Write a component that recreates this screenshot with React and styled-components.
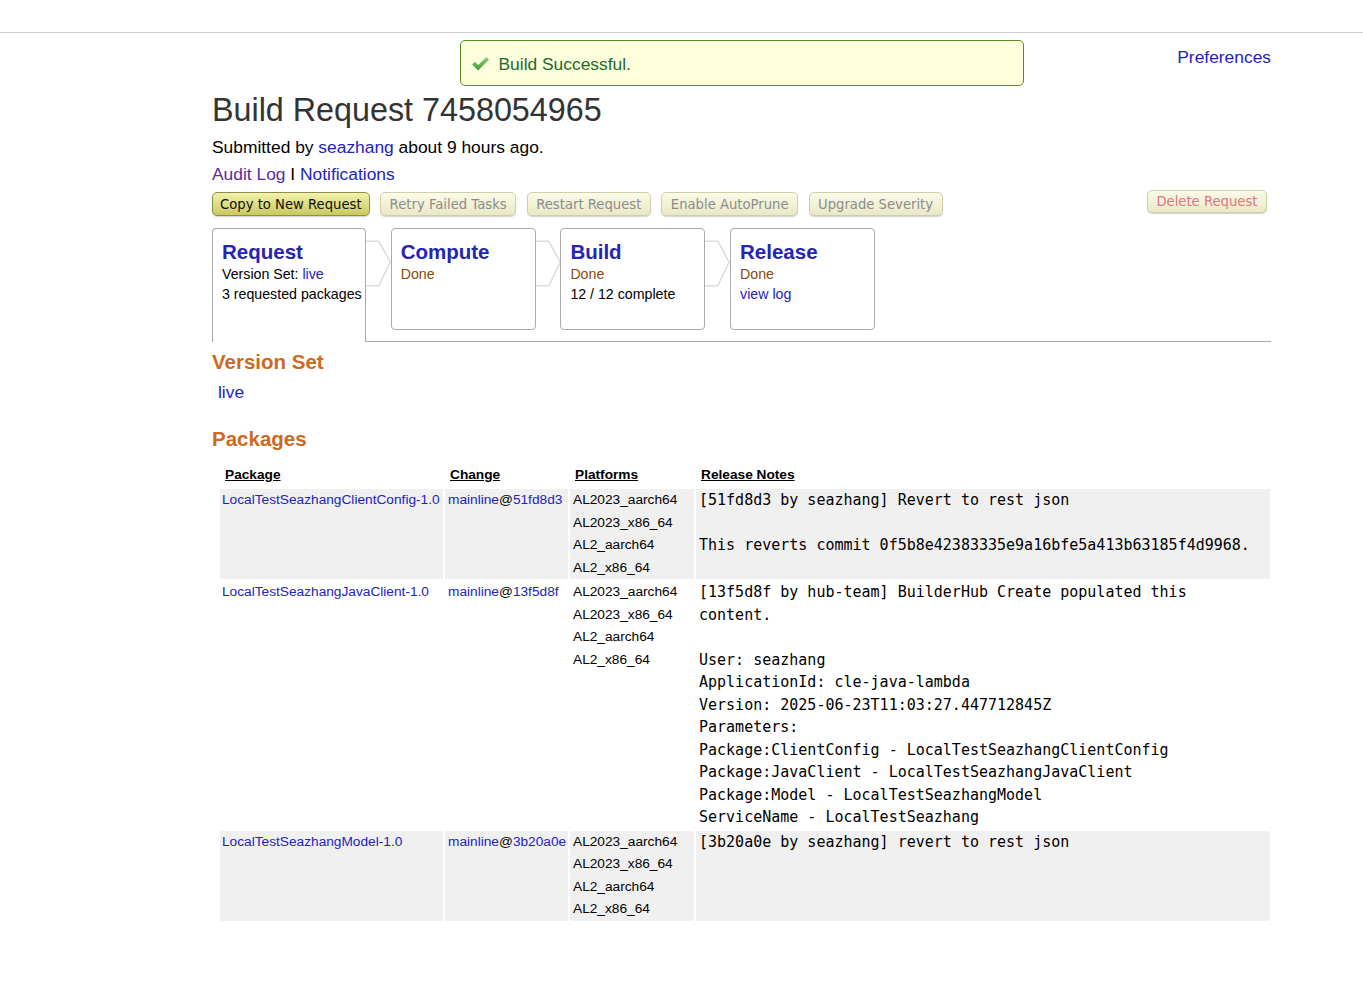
import React from 'react';
import styled, { createGlobalStyle } from 'styled-components';

const GlobalStyle = createGlobalStyle`
  body {
    margin: 0;
    background: #fff;
    font-family: 'Liberation Sans', Arial, sans-serif;
    color: #000;
  }
  a {
    color: #2323c0;
    text-decoration: none;
  }
`;

const TopBar = styled.div`
  height: 32px;
  border-bottom: 1px solid #d0d0d0;
`;

const Page = styled.div`
  width: 1059px;
  margin-left: 212px;
`;

const FlashRow = styled.div`
  display: grid;
  grid-template-columns: 1fr 564px 1fr;
  margin-top: 7px;
`;

const Flash = styled.div`
  grid-column: 2;
  display: flex;
  align-items: center;
  gap: 9px;
  padding: 2px 0 0 10px;
  box-sizing: border-box;
  height: 46px;
  background: #ffffdd;
  border: 1px solid #5b8c27;
  border-radius: 5px;
  color: #1b6b2b;
  font-size: 17.4px;
`;

const Prefs = styled.a`
  grid-column: 3;
  justify-self: end;
  margin-top: 7px;
  font-size: 17.4px;
`;

const Title = styled.h1`
  margin: 5px 0 0;
  font-size: 32.3px;
  font-weight: normal;
  line-height: 38px;
  color: #333;
`;

const Line = styled.div`
  font-size: 17.4px;
  line-height: 27px;
  margin-top: ${p => p.$top || 0}px;
`;

const Visited = styled.a`
  color: #5a2aa8;
`;

const Buttons = styled.div`
  display: flex;
  align-items: flex-start;
  gap: 10.5px;
  margin-top: 2px;
`;

const Button = styled.button`
  height: ${p => (p.$danger ? 23 : 24)}px;
  margin-top: ${p => (p.$danger ? 0 : 2)}px;
  margin-left: ${p => (p.$danger ? 'auto' : '0')};
  margin-right: ${p => (p.$danger ? 4 : 0)}px;
  padding: 0 ${p => (p.$primary ? 7 : 8.5)}px;
  font-family: 'DejaVu Sans', sans-serif;
  font-size: 13.2px;
  border-radius: 5px;
  border: 1px solid ${p => (p.$primary ? '#8e8e45' : '#cfcfa8')};
  background: ${p =>
    p.$primary
      ? 'linear-gradient(#f2f2ac, #c9c95f)'
      : 'linear-gradient(#fbfbe8, #e9e9c6)'};
  color: ${p => (p.$primary ? '#111' : p.$danger ? '#e07585' : '#8c8c8c')};
  box-shadow: 0 1px 1px rgba(0, 0, 0, 0.18);
`;

const Steps = styled.div`
  display: flex;
  align-items: flex-start;
  margin-top: 12px;
  border-bottom: 1px solid #aaa;
  height: 113px;
`;

const Step = styled.div`
  box-sizing: border-box;
  flex: none;
  width: ${p => (p.$active ? 154 : 145)}px;
  height: ${p => (p.$active ? 114 : 102)}px;
  padding: 11px 0 0 9px;
  border: 1px solid #aaa;
  border-bottom: ${p => (p.$active ? 'none' : '1px solid #aaa')};
  border-radius: ${p => (p.$active ? '4px 4px 0 0' : '4px')};
  background: #fff;
  white-space: nowrap;
`;

const StepTitle = styled.div`
  font-size: 20.5px;
  font-weight: bold;
  color: #2525b5;
  line-height: 24px;
`;

const StepLine = styled.div`
  font-size: 14.2px;
  line-height: 20px;
  color: ${p => (p.$done ? '#8a4a08' : '#000')};
`;

const Arrow = styled.svg`
  flex: none;
  display: block;
  margin-top: 12px;
`;

const Heading = styled.h2`
  margin: ${p => p.$top}px 0 0;
  font-size: 20.5px;
  font-weight: bold;
  line-height: 24px;
  color: #cc6a22;
`;

const VsLink = styled.a`
  display: block;
  margin: 7px 0 0 6px;
  font-size: 17.4px;
  line-height: 22px;
`;

const Table = styled.table`
  margin: 14px 0 0 6px;
  border-spacing: 2px;
  table-layout: fixed;
  width: 1054px;
`;

const Th = styled.th`
  text-align: left;
  font-size: 13.7px;
  font-weight: bold;
  text-decoration: underline;
  padding: 0 5px 4px;
  line-height: 16px;
`;

const Tr = styled.tr`
  background: ${p => (p.$shade ? '#f0f0f0' : '#fff')};
`;

const Td = styled.td`
  vertical-align: top;
  padding: 0 ${p => (p.$wide ? 3 : 2)}px;
  font-size: 13.7px;
  line-height: 22.5px;
`;

const Notes = styled.pre`
  margin: 0;
  font-family: 'DejaVu Sans Mono', monospace;
  font-size: 15px;
  line-height: 22.5px;
  white-space: pre-wrap;
`;

const Check = () => (
  <svg width="19" height="16" viewBox="0 0 19 16">
    <defs>
      <linearGradient id="ck" x1="0" y1="0" x2="0" y2="1">
        <stop offset="0" stopColor="#8fd07a" />
        <stop offset="1" stopColor="#3e9a3a" />
      </linearGradient>
    </defs>
    <path d="M1 8.5 L4 5.8 L7.2 9 L15.5 1 L18 3.6 L7.2 14.5 Z" fill="url(#ck)" />
  </svg>
);

const StepArrow = () => (
  <Arrow width="24.7" height="50" viewBox="0 0 25 50">
    <path
      d="M0 1 H13 L24.5 22 L13 46 H0"
      fill="none"
      stroke="#dcdcdc"
      strokeWidth="1.5"
    />
  </Arrow>
);

const platforms = ['AL2023_aarch64', 'AL2023_x86_64', 'AL2_aarch64', 'AL2_x86_64'];

const packages = [
  {
    name: 'LocalTestSeazhangClientConfig-1.0',
    commit: '51fd8d3',
    notes:
      '[51fd8d3 by seazhang] Revert to rest json\n\nThis reverts commit 0f5b8e42383335e9a16bfe5a413b63185f4d9968.',
  },
  {
    name: 'LocalTestSeazhangJavaClient-1.0',
    commit: '13f5d8f',
    notes: [
      '[13f5d8f by hub-team] BuilderHub Create populated this',
      'content.',
      '',
      'User: seazhang',
      'ApplicationId: cle-java-lambda',
      'Version: 2025-06-23T11:03:27.447712845Z',
      'Parameters:',
      'Package:ClientConfig - LocalTestSeazhangClientConfig',
      'Package:JavaClient - LocalTestSeazhangJavaClient',
      'Package:Model - LocalTestSeazhangModel',
      'ServiceName - LocalTestSeazhang',
    ].join('\n'),
  },
  {
    name: 'LocalTestSeazhangModel-1.0',
    commit: '3b20a0e',
    notes: '[3b20a0e by seazhang] revert to rest json',
  },
];

export default function App() {
  return (
    <>
      <GlobalStyle />
      <TopBar />
      <Page>
        <FlashRow>
          <Flash>
            <Check />
            Build Successful.
          </Flash>
          <Prefs href="#">Preferences</Prefs>
        </FlashRow>

        <Title>Build Request 7458054965</Title>
        <Line $top={5}>
          Submitted by <a href="#">seazhang</a> about 9 hours ago.
        </Line>
        <Line>
          <Visited href="#">Audit Log</Visited> I <a href="#">Notifications</a>
        </Line>

        <Buttons>
          <Button $primary>Copy to New Request</Button>
          <Button>Retry Failed Tasks</Button>
          <Button>Restart Request</Button>
          <Button>Enable AutoPrune</Button>
          <Button>Upgrade Severity</Button>
          <Button $danger>Delete Request</Button>
        </Buttons>

        <Steps>
          <Step $active>
            <StepTitle>Request</StepTitle>
            <StepLine>
              Version Set: <a href="#">live</a>
            </StepLine>
            <StepLine>3 requested packages</StepLine>
          </Step>
          <StepArrow />
          <Step>
            <StepTitle>Compute</StepTitle>
            <StepLine $done>Done</StepLine>
          </Step>
          <StepArrow />
          <Step>
            <StepTitle>Build</StepTitle>
            <StepLine $done>Done</StepLine>
            <StepLine>12 / 12 complete</StepLine>
          </Step>
          <StepArrow />
          <Step>
            <StepTitle>Release</StepTitle>
            <StepLine $done>Done</StepLine>
            <StepLine>
              <a href="#">view log</a>
            </StepLine>
          </Step>
        </Steps>

        <Heading $top={8}>Version Set</Heading>
        <VsLink href="#">live</VsLink>

        <Heading $top={24}>Packages</Heading>
        <Table>
          <colgroup>
            <col style={{ width: 223 }} />
            <col style={{ width: 123 }} />
            <col style={{ width: 124 }} />
            <col />
          </colgroup>
          <thead>
            <tr>
              <Th>Package</Th>
              <Th>Change</Th>
              <Th>Platforms</Th>
              <Th>Release Notes</Th>
            </tr>
          </thead>
          <tbody>
            {packages.map((pkg, i) => (
              <Tr key={pkg.name} $shade={i % 2 === 0}>
                <Td>
                  <a href="#">{pkg.name}</a>
                </Td>
                <Td $wide>
                  <a href="#">mainline</a>@<a href="#">{pkg.commit}</a>
                </Td>
                <Td $wide>
                  {platforms.map(p => (
                    <div key={p}>{p}</div>
                  ))}
                </Td>
                <Td $wide>
                  <Notes>{pkg.notes}</Notes>
                </Td>
              </Tr>
            ))}
          </tbody>
        </Table>
      </Page>
    </>
  );
}
